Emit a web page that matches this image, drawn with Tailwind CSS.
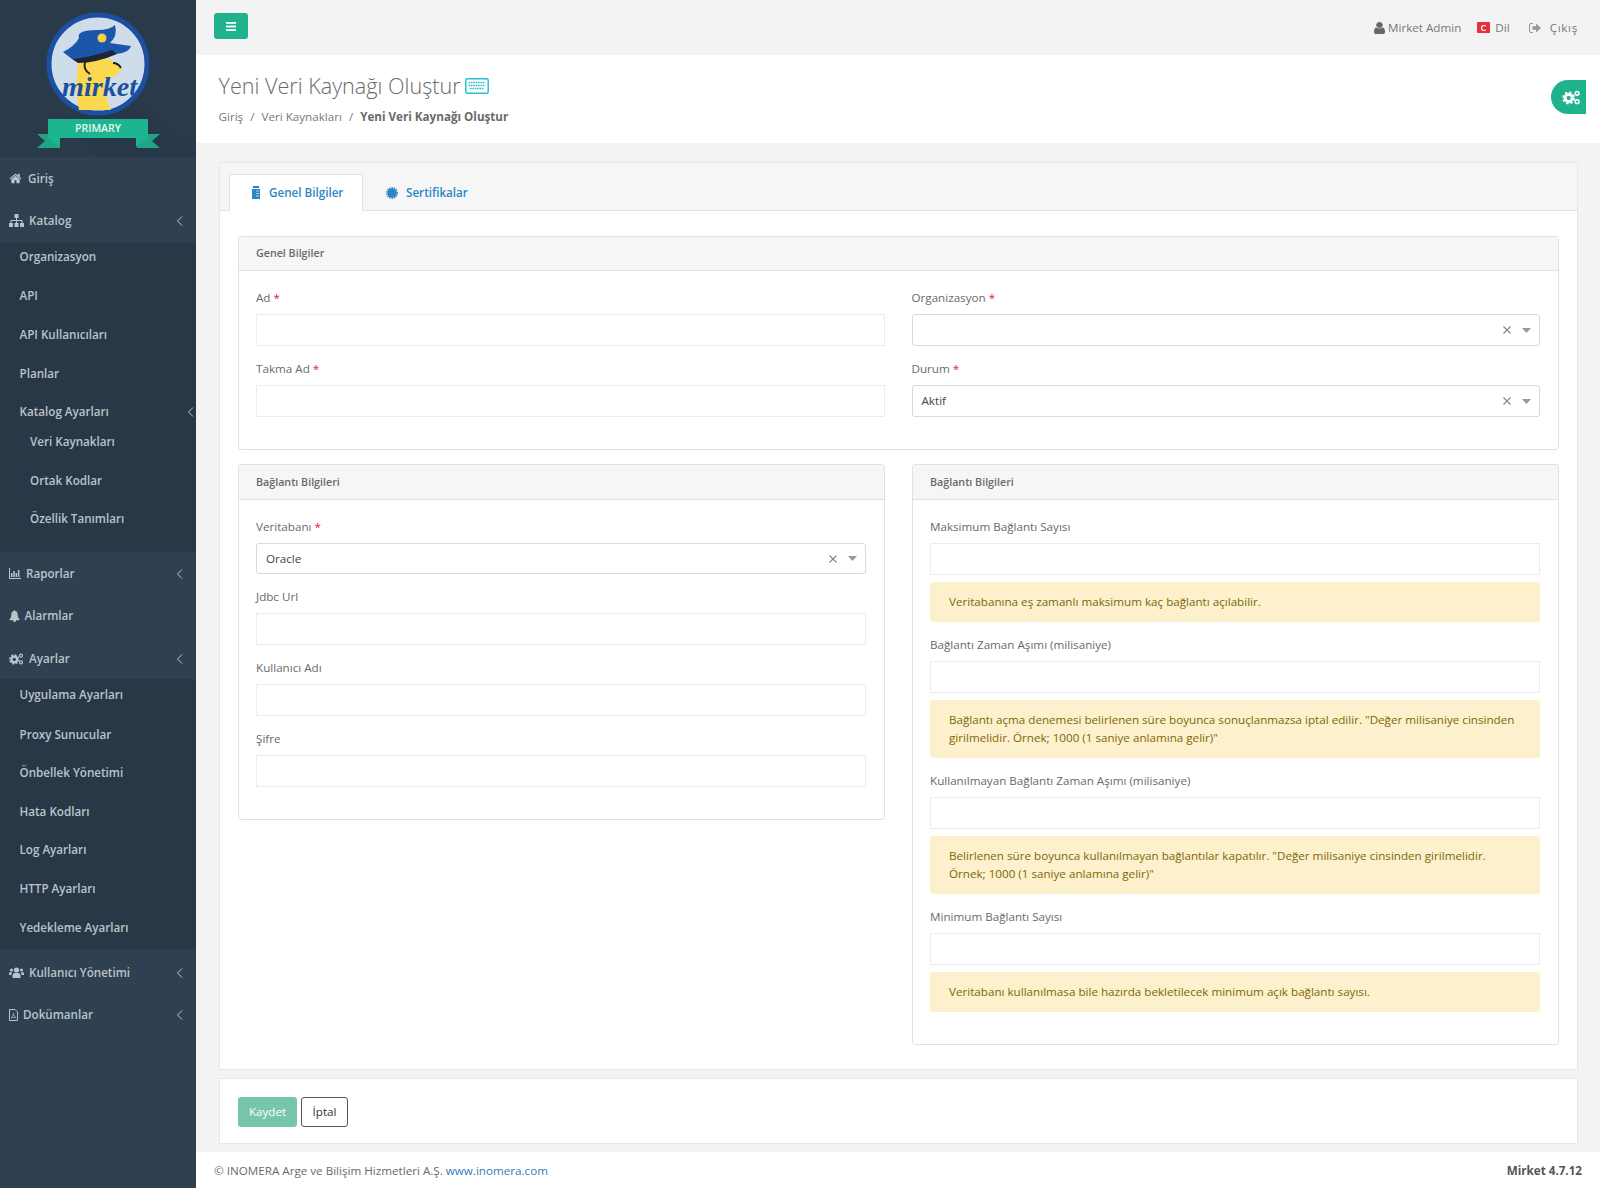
<!DOCTYPE html>
<html lang="tr">
  <head>
    <meta charset="UTF-8" />
    <meta name="viewport" content="width=device-width, initial-scale=1.0" />
    <title>Yeni Veri Kaynağı Oluştur</title>
    <script src="https://cdn.jsdelivr.net/npm/@tailwindcss/browser@4"></script>
  </head>
  <body class="bg-[#f3f3f3] font-['Open_Sans',sans-serif] text-[11.65px] text-[#676a6c]">
    <!-- shared icons -->
    <svg class="hidden">
      <defs>
        <symbol id="chev" viewBox="0 0 8 12"><polyline points="6,1.500 1.500,6 6,10.500" fill="none" stroke="currentColor" stroke-width="1" /></symbol>
        <symbol id="cogs" viewBox="0 0 20 16">
          <circle cx="7" cy="8.500" r="3.800" fill="none" stroke="currentColor" stroke-width="3" />
          <circle cx="7" cy="8.500" r="5.900" fill="none" stroke="currentColor" stroke-width="2" stroke-dasharray="2.600 2" />
          <circle cx="16" cy="3.500" r="2" fill="none" stroke="currentColor" stroke-width="1.600" />
          <circle cx="16" cy="12.500" r="2" fill="none" stroke="currentColor" stroke-width="1.600" />
        </symbol>
      </defs>
    </svg>

    <div class="flex w-[1600px] h-[1188px] overflow-hidden">
      <!-- sidebar -->
      <aside class="w-[196px] shrink-0 bg-[#2f4050] text-[#b9c4cc] font-semibold">
        <div class="h-[157px] bg-[#293a4a]">
          <svg width="196" height="157" viewBox="0 0 196 157">
            <polygon points="130,95 196,150 196,157 100,157 60,120" fill="#27384a" />
            <circle cx="98" cy="64" r="49" fill="#cfdcea" stroke="#1b50a0" stroke-width="5" />
            <path d="M79 58 Q74 85 79 110 L111 110 Q104 95 104 80 Q116 78 122 69 Q116 61 106 58 Z" fill="#fbd84c" />
            <path d="M85 62 Q83 70 90 74 M113 63 q5 0 8 5" stroke="#222" stroke-width="2" fill="none" />
            <path d="M63 52 Q75 46 79 38 Q76 30 97 30 Q110 30 115 25 Q118 36 110 43 L131 46 Q128 55 108 54 Q88 59 72 59 Z" fill="#1a57ac" />
            <path d="M72 59 Q92 57 112 50 L117 54 Q96 63 78 63 Z" fill="#1d2433" />
            <circle cx="102" cy="38" r="4.500" fill="#f6cf45" />
            <text x="62" y="96" textLength="75" lengthAdjust="spacingAndGlyphs" font-family="'Liberation Serif',serif" font-style="italic" font-size="27" fill="#1b50a0">mirket</text>
            <polygon points="37,134 60,134 60,148 37,148 45,141" fill="#1fa583" />
            <polygon points="160,134 137,134 137,148 160,148 152,141" fill="#1fa583" />
            <polygon points="48,119 148,119 148,138 136,138 136,147 148,138 60,138 60,147 48,138" fill="#1db58f" />
            <text x="98" y="132" text-anchor="middle" font-family="'Open Sans',sans-serif" font-weight="600" font-size="10.5" fill="#e9f6f1">PRIMARY</text>
          </svg>
        </div>

        <a class="flex items-center h-[42px] pl-[9px] pt-[1px] gap-[6px]">
          <svg class="w-[13px] h-[13px]" viewBox="0 0 1792 1792" fill="currentColor"><path d="M1472 992v480q0 26-19 45t-45 19h-384v-384h-256v384h-384q-26 0-45-19t-19-45v-480q0-1 .5-3t.5-3l575-474 575 474q1 2 1 6zm223-69l-62 74q-8 9-21 11h-3q-13 0-21-7l-692-577-692 577q-12 8-24 7-13-2-21-11l-62-74q-8-10-7-23.500t11-21.500l719-599q32-26 76-26t76 26l244 204v-195q0-14 9-23t23-9h192q14 0 23 9t9 23v408l219 182q10 8 11 21.500t-7 23.500z" /></svg>
          Giriş
        </a>
        <a class="flex items-center h-[43px] pl-[9px] pr-[12px] gap-[5px]">
          <svg class="w-[15px] h-[13px]" viewBox="0 0 15 13" fill="currentColor"><rect x="5.500" y="0" width="4" height="4" rx=".5" /><rect x="0" y="9" width="4" height="4" rx=".5" /><rect x="5.500" y="9" width="4" height="4" rx=".5" /><rect x="11" y="9" width="4" height="4" rx=".5" /><path d="M7 4h1v2h5.500v3h-1V7H8v2H7V7H2.500v2h-1V6H7z" /></svg>
          <span class="flex-1">Katalog</span>
          <svg class="w-[8px] h-[12px]"><use href="#chev" /></svg>
        </a>
        <div class="h-[310px] bg-[#293846]">
          <a class="flex items-center h-[34px] pb-[4px] pl-[19.500px]">Organizasyon</a>
          <a class="flex items-center h-[39px] pl-[19.500px]">API</a>
          <a class="flex items-center h-[39px] pl-[19.500px]">API Kullanıcıları</a>
          <a class="flex items-center h-[39px] pl-[19.500px]">Planlar</a>
          <a class="flex items-center justify-between h-[38px] pl-[19.500px] pr-[1px]">Katalog Ayarları <svg class="w-[8px] h-[12px]"><use href="#chev" /></svg></a>
          <a class="flex items-center h-[22px] pl-[30px]">Veri Kaynakları</a>
          <a class="flex items-center h-[38.800px] pl-[30px] mt-[8px]">Ortak Kodlar</a>
          <a class="flex items-center h-[38.800px] pl-[30px]">Özellik Tanımları</a>
        </div>
        <a class="flex items-center h-[43px] pl-[9px] pr-[12px] gap-[5px]">
          <svg class="w-[12px] h-[11px]" viewBox="0 0 12 11" fill="currentColor"><path d="M0 0h1v10h11v1H0z" /><rect x="2" y="5" width="1.500" height="4" /><rect x="4.300" y="3" width="1.500" height="6" /><rect x="6.600" y="5" width="1.500" height="4" /><rect x="8.900" y="2" width="1.500" height="7" /></svg>
          <span class="flex-1">Raporlar</span>
          <svg class="w-[8px] h-[12px]"><use href="#chev" /></svg>
        </a>
        <a class="flex items-center h-[42px] pl-[9px] gap-[4.500px]">
          <svg class="w-[11px] h-[12px]" viewBox="0 0 1792 1792" fill="currentColor" preserveAspectRatio="none"><path d="M912 1696q0-16-16-16-59 0-101.500-42.500t-42.500-101.500q0-16-16-16t-16 16q0 73 51.500 124.500t124.500 51.500q16 0 16-16zm816-288q0 52-38 90t-90 38h-448q0 106-75 181t-181 75-181-75-75-181h-448q-52 0-90-38t-38-90q50-42 91-88t85-119.500 74.500-158.500 50-206 19.500-260q0-152 117-282.500t307-158.500q-8-19-8-39 0-40 28-68t68-28 68 28 28 68q0 20-8 39 190 28 307 158.500t117 282.500q0 139 19.500 260t50 206 74.500 158.500 85 119.500 91 88z" /></svg>
          Alarmlar
        </a>
        <a class="flex items-center h-[42px] pl-[9px] pr-[12px] pt-[1px] gap-[5px]">
          <svg class="w-[15px] h-[12px]"><use href="#cogs" /></svg>
          <span class="flex-1">Ayarlar</span>
          <svg class="w-[8px] h-[12px]"><use href="#chev" /></svg>
        </a>
        <div class="h-[271px] bg-[#293846]">
          <a class="flex items-center h-[32px] pl-[19.500px]">Uygulama Ayarları</a>
          <a class="flex items-center h-[38.600px] pl-[19.500px] mt-[4px]">Proxy Sunucular</a>
          <a class="flex items-center h-[38.600px] pl-[19.500px]">Önbellek Yönetimi</a>
          <a class="flex items-center h-[38.600px] pl-[19.500px]">Hata Kodları</a>
          <a class="flex items-center h-[38.600px] pl-[19.500px]">Log Ayarları</a>
          <a class="flex items-center h-[38.600px] pl-[19.500px]">HTTP Ayarları</a>
          <a class="flex items-center h-[38.600px] pl-[19.500px]">Yedekleme Ayarları</a>
        </div>
        <a class="flex items-center h-[43px] pl-[9px] pr-[12px] pt-[2px] gap-[5px]">
          <svg class="w-[15px] h-[11px]" viewBox="0 0 15 11" fill="currentColor"><circle cx="7.500" cy="3" r="2.600" /><path d="M3.500 11V8.500Q3.500 6 6 6h3q2.500 0 2.500 2.500V11z" /><circle cx="2.500" cy="3" r="1.600" /><circle cx="12.500" cy="3" r="1.600" /><path d="M0 8V6.500Q0 5 1.500 5h1.300Q2.500 6.500 2.500 8zM15 8V6.500Q15 5 13.500 5h-1.300q.3 1.500.3 3z" /></svg>
          <span class="flex-1">Kullanıcı Yönetimi</span>
          <svg class="w-[8px] h-[12px]"><use href="#chev" /></svg>
        </a>
        <a class="flex items-center h-[43px] pl-[9px] pr-[12px] pt-[1px] gap-[5px]">
          <svg class="w-[9px] h-[12px]" viewBox="0 0 9 12" fill="none" stroke="currentColor"><path d="M.5.500h5.500l2.500 2.500v8.500h-8z" /><path d="M2.500 9Q4 7 4.500 4.500 5 8 6.800 8.500 4 8 2.500 9z" stroke-width=".7" /></svg>
          <span class="flex-1">Dokümanlar</span>
          <svg class="w-[8px] h-[12px]"><use href="#chev" /></svg>
        </a>
      </aside>

      <main class="flex-1 flex flex-col min-w-0">
        <!-- top bar -->
        <header class="h-[55px] shrink-0 flex items-center justify-between pl-[18px] pr-[22px]">
          <button class="w-[34px] h-[26px] mb-[3px] rounded-[3px] bg-[#1fb28d] flex items-center justify-center">
            <svg class="w-[10px] h-[9px]" viewBox="0 0 10 9" fill="#fff"><rect width="10" height="1.800" /><rect y="3.600" width="10" height="1.800" /><rect y="7.200" width="10" height="1.800" /></svg>
          </button>
          <nav class="flex items-center pt-[1px] text-[#777]">
            <svg class="w-[11px] h-[12px] mr-[3px]" viewBox="256 128 1280 1536" fill="#666" preserveAspectRatio="none"><path d="M1536 1399q0 109-62.500 187t-150.500 78h-854q-88 0-150.500-78t-62.500-187q0-85 8.500-160.500t31.500-152 58.500-131 94-89 134.500-34.500q131 128 313 128t313-128q76 0 134.500 34.500t94 89 58.500 131 31.500 152 8.500 160.500zm-256-887q0 159-112.500 271.500t-271.500 112.500-271.500-112.500-112.500-271.500 112.500-271.500 271.500-112.500 271.500 112.500 112.500 271.500z" /></svg>
            <span>Mirket Admin</span>
            <span class="ml-[16px] mr-[5px] w-[13px] h-[11px] rounded-[1px] bg-[#e8303a] flex items-center justify-center">
              <span class="block w-[6px] h-[6px] rounded-full border-[1.500px] border-white border-r-transparent"></span>
            </span>
            <span>Dil</span>
            <svg class="w-[12px] h-[10px] ml-[19px] mr-[9px]" viewBox="0 0 12 10" fill="#999"><path d="M4 .500H2Q.500.500.500 2v6q0 1.500 1.500 1.500h2" fill="none" stroke="#999" /><path d="M3.500 3.300h3.500V.500L12 5 7 9.500V6.700H3.500z" /></svg>
            <span class="tracking-[0.7px]">Çıkış</span>
          </nav>
        </header>

        <!-- title band -->
        <section class="relative h-[88px] shrink-0 bg-white pl-[22.500px] pt-[16px]">
          <h1 class="flex items-center text-[21.6px] leading-[30px] font-light text-[#676a6c]">
            Yeni Veri Kaynağı Oluştur
            <svg class="ml-[4px] w-[24px] h-[16px]" viewBox="0 0 24 16" fill="none"><rect x=".8" y=".8" width="22.400" height="14.400" rx="1.500" stroke="#27c0cd" stroke-width="1.500" /><path d="M3.500 4.500h17M3.500 7.500h17M5 10.500h14" stroke="#27c0cd" stroke-width="1.500" stroke-dasharray="1.600 .8" /></svg>
          </h1>
          <div class="mt-[6.500px] leading-[18px] text-[#777]">
            Giriş<span class="mx-[7px]">/</span>Veri Kaynakları<span class="mx-[7px]">/</span><b class="font-bold text-[#676a6c]">Yeni Veri Kaynağı Oluştur</b>
          </div>
          <button class="absolute right-[14px] top-[25px] w-[35px] h-[34px] rounded-l-full bg-[#1fb28d] flex items-center justify-center pl-[5px]">
            <svg class="w-[19px] h-[15px] text-white"><use href="#cogs" /></svg>
          </button>
        </section>

        <!-- content -->
        <section class="flex-1 pl-[23px] pr-[22px] pt-[19px]">
          <div class="h-[908px] bg-white border border-[#e7e7e7]">
            <div class="h-[48px] bg-[#f6f6f6] border-b border-[#e2e2e2] pl-[9px] pt-[11px] flex text-[#2b86c5] font-semibold">
              <a class="w-[134px] h-[37px] bg-white border border-[#e2e2e2] border-b-white rounded-t-[3px] flex items-center pl-[22px] gap-[9px]">
                <svg class="w-[8px] h-[13px]" viewBox="0 0 10 13" preserveAspectRatio="none" fill="#2b86c5"><rect x="1" width="8" height="2" /><path d="M0 3h10v10H0z" /><path d="M5 5h4M5 7.500h4M5 10h4" stroke="#fff" stroke-width=".7" /></svg>
                Genel Bilgiler
              </a>
              <a class="flex items-center pl-[23px] gap-[8px] h-[37px]">
                <svg class="w-[12px] h-[12px]" viewBox="0 0 12 12"><circle cx="6" cy="6" r="4.800" fill="#2b86c5" /><circle cx="6" cy="6" r="5.300" fill="none" stroke="#2b86c5" stroke-width="1.400" stroke-dasharray="1.300 1.100" /></svg>
                Sertifikalar
              </a>
            </div>

            <div class="px-[18px] pt-[25px]">
              <!-- Genel Bilgiler -->
              <div class="h-[214px] border border-[#e2e2e2] rounded-[3px]">
                <div class="h-[34px] bg-[#f6f6f6] border-b border-[#e2e2e2] rounded-t-[3px] flex items-center pl-[17px] text-[10.7px] font-semibold">Genel Bilgiler</div>
                <div class="grid grid-cols-2 gap-x-[27px] gap-y-[14px] pl-[17px] pr-[18px] pt-[18px]">
                  <div>
                    <label class="block leading-[18px] mb-[7px]">Ad <span class="text-[#e0202c]">*</span></label>
                    <input class="block w-full h-[32px] border border-[#ececec]" />
                  </div>
                  <div>
                    <label class="block leading-[18px] mb-[7px]">Organizasyon <span class="text-[#e0202c]">*</span></label>
                    <div class="h-[32px] border border-[#d9d9d9] rounded-[3px] flex items-center justify-end pr-[8px] gap-[11px]">
                      <svg class="w-[8px] h-[8px]" viewBox="0 0 8 8" stroke="#888" stroke-width="1.200"><path d="M.5.500l7 7M7.500.500l-7 7" /></svg>
                      <svg class="w-[9px] h-[5px]" viewBox="0 0 9 5" fill="#999"><path d="M0 0h9L4.500 5z" /></svg>
                    </div>
                  </div>
                  <div>
                    <label class="block leading-[18px] mb-[7px]">Takma Ad <span class="text-[#e0202c]">*</span></label>
                    <input class="block w-full h-[32px] border border-[#ececec]" />
                  </div>
                  <div>
                    <label class="block leading-[18px] mb-[7px]">Durum <span class="text-[#e0202c]">*</span></label>
                    <div class="h-[32px] border border-[#d9d9d9] rounded-[3px] flex items-center pl-[9px] pr-[8px] gap-[11px] text-[#444]">
                      <span class="flex-1">Aktif</span>
                      <svg class="w-[8px] h-[8px]" viewBox="0 0 8 8" stroke="#888" stroke-width="1.200"><path d="M.5.500l7 7M7.500.500l-7 7" /></svg>
                      <svg class="w-[9px] h-[5px]" viewBox="0 0 9 5" fill="#999"><path d="M0 0h9L4.500 5z" /></svg>
                    </div>
                  </div>
                </div>
              </div>

              <div class="grid grid-cols-2 gap-x-[27px] items-start mt-[14px]">
                <!-- left -->
                <div class="h-[356px] border border-[#e2e2e2] rounded-[3px]">
                  <div class="h-[35px] bg-[#f6f6f6] border-b border-[#e2e2e2] rounded-t-[3px] flex items-center pl-[17px] text-[10.7px] font-semibold">Bağlantı Bilgileri</div>
                  <div class="flex flex-col gap-[14px] pl-[17px] pr-[18px] pt-[17.500px]">
                    <div>
                      <label class="block leading-[18px] mb-[7.500px]">Veritabanı <span class="text-[#e0202c]">*</span></label>
                      <div class="h-[31px] border border-[#d9d9d9] rounded-[3px] flex items-center pl-[9px] pr-[8px] gap-[11px] text-[#444]">
                        <span class="flex-1">Oracle</span>
                        <svg class="w-[8px] h-[8px]" viewBox="0 0 8 8" stroke="#888" stroke-width="1.200"><path d="M.5.500l7 7M7.500.500l-7 7" /></svg>
                        <svg class="w-[9px] h-[5px]" viewBox="0 0 9 5" fill="#999"><path d="M0 0h9L4.500 5z" /></svg>
                      </div>
                    </div>
                    <div>
                      <label class="block leading-[18px] mb-[7px]">Jdbc Url</label>
                      <input class="block w-full h-[32px] border border-[#ececec]" />
                    </div>
                    <div>
                      <label class="block leading-[18px] mb-[7px]">Kullanıcı Adı</label>
                      <input class="block w-full h-[32px] border border-[#ececec]" />
                    </div>
                    <div>
                      <label class="block leading-[18px] mb-[7px]">Şifre</label>
                      <input class="block w-full h-[32px] border border-[#ececec]" />
                    </div>
                  </div>
                </div>
                <!-- right -->
                <div class="h-[581px] border border-[#e2e2e2] rounded-[3px]">
                  <div class="h-[35px] bg-[#f6f6f6] border-b border-[#e2e2e2] rounded-t-[3px] flex items-center pl-[17px] text-[10.7px] font-semibold">Bağlantı Bilgileri</div>
                  <div class="flex flex-col gap-[14px] pl-[17px] pr-[18px] pt-[17.500px]">
                    <div>
                      <label class="block leading-[18px] mb-[7.500px]">Maksimum Bağlantı Sayısı</label>
                      <input class="block w-full h-[32px] border border-[#ececec]" />
                      <div class="mt-[7px] bg-[#fcf0cd] rounded-[3px] px-[19px] py-[11px] leading-[18px] text-[#7c6808]">Veritabanına eş zamanlı maksimum kaç bağlantı açılabilir.</div>
                    </div>
                    <div>
                      <label class="block leading-[18px] mb-[7px]">Bağlantı Zaman Aşımı (milisaniye)</label>
                      <input class="block w-full h-[32px] border border-[#ececec]" />
                      <div class="mt-[7px] bg-[#fcf0cd] rounded-[3px] px-[19px] py-[11px] leading-[18px] text-[#7c6808]">Bağlantı açma denemesi belirlenen süre boyunca sonuçlanmazsa iptal edilir. "Değer milisaniye cinsinden girilmelidir. Örnek; 1000 (1 saniye anlamına gelir)"</div>
                    </div>
                    <div>
                      <label class="block leading-[18px] mb-[7px]">Kullanılmayan Bağlantı Zaman Aşımı (milisaniye)</label>
                      <input class="block w-full h-[32px] border border-[#ececec]" />
                      <div class="mt-[7px] bg-[#fcf0cd] rounded-[3px] px-[19px] py-[11px] leading-[18px] text-[#7c6808]">Belirlenen süre boyunca kullanılmayan bağlantılar kapatılır. "Değer milisaniye cinsinden girilmelidir. Örnek; 1000 (1 saniye anlamına gelir)"</div>
                    </div>
                    <div>
                      <label class="block leading-[18px] mb-[7px]">Minimum Bağlantı Sayısı</label>
                      <input class="block w-full h-[32px] border border-[#ececec]" />
                      <div class="mt-[7px] bg-[#fcf0cd] rounded-[3px] px-[19px] py-[11px] leading-[18px] text-[#7c6808]">Veritabanı kullanılmasa bile hazırda bekletilecek minimum açık bağlantı sayısı.</div>
                    </div>
                  </div>
                </div>
              </div>
            </div>
          </div>

          <!-- actions -->
          <div class="mt-[8px] h-[66px] bg-white border border-[#e7e7e7] flex items-center pl-[18px] pt-[2px] gap-[4px]">
            <button class="w-[59px] h-[30px] rounded-[3px] bg-[#78c5ad] text-white">Kaydet</button>
            <button class="w-[47px] h-[30px] rounded-[3px] border border-[#555] text-[#333]">İptal</button>
          </div>
        </section>

        <!-- footer -->
        <footer class="h-[36px] shrink-0 bg-white flex items-center justify-between pl-[18px] pr-[18px] pt-[2px]">
          <span>© INOMERA Arge ve Bilişim Hizmetleri A.Ş. <a class="text-[#337ab7]">www.inomera.com</a></span>
          <b class="font-bold text-[#555]">Mirket 4.7.12</b>
        </footer>
      </main>
    </div>
  </body>
</html>
